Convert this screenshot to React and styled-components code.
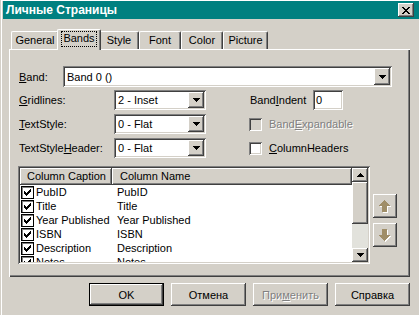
import React from "react";
import styled, { createGlobalStyle, css } from "styled-components";

const face = "#d4d0c8";

const GlobalStyle = createGlobalStyle`
  html, body { margin: 0; padding: 0; background: ${face}; }
  body {
    font-family: "Liberation Sans", Arial, sans-serif;
    font-size: 11px;
    color: #000;
  }
  * { box-sizing: border-box; }
`;

const raised = css`
  box-shadow: inset -1px -1px #404040, inset 1px 1px #fff,
    inset -2px -2px #808080, inset 2px 2px ${face};
`;
const sunken = css`
  box-shadow: inset 1px 1px #808080, inset -1px -1px #fff,
    inset 2px 2px #404040, inset -2px -2px ${face};
`;

const Window = styled.div`
  width: 419px;
  height: 315px;
  overflow: hidden;
  background: ${face};
  border-left: 1px solid ${face};
`;

const Frame = styled.div`
  height: 100%;
  border-left: 1px solid #fff;
  border-top: 1px solid #fff;
  padding-left: 1px;
`;

const TitleBar = styled.div`
  height: 18px;
  background: #008080;
  display: flex;
  align-items: center;
  justify-content: space-between;
  padding: 0 5px 0 3px;
  color: #fff;
  font-family: "Liberation Sans", Arial, sans-serif;
  font-weight: bold;
  font-size: 12px;
`;

const CloseBtn = styled.div`
  width: 16px;
  height: 14px;
  background: ${face};
  ${raised};
  display: flex;
  align-items: center;
  justify-content: center;
  svg { display: block; }
`;

const Body = styled.div`
  padding: 10px 9px 0 6px;
`;

const TabStrip = styled.div`
  display: flex;
  align-items: flex-end;
  height: 20px;
  padding-left: 2px;
  position: relative;
  z-index: 1;
`;

const Tab = styled.div`
  width: ${(p) => p.$w}px;
  height: ${(p) => (p.$active ? 21 : 18)}px;
  margin: ${(p) => (p.$active ? "0 -2px -1px" : "0")};
  background: ${face};
  border-top: 1px solid #fff;
  border-left: 1px solid #fff;
  border-right: 1px solid #404040;
  border-radius: 2px 2px 0 0;
  box-shadow: inset -1px 0 #808080;
  display: flex;
  justify-content: center;
  padding-top: 2px;
  position: relative;
  z-index: ${(p) => (p.$active ? 2 : 0)};
  span {
    line-height: 13px;
    height: 14px;
    padding: 0 1px;
    outline: ${(p) => (p.$active ? "1px dotted #000" : "none")};
  }
`;

const Panel = styled.div`
  height: 228px;
  background: ${face};
  box-shadow: inset 1px 1px #fff, inset -1px -1px #404040,
    inset -2px -2px #808080;
  padding: 17px 0 0 9px;
  display: flex;
  flex-direction: column;
`;

const BandRow = styled.div`
  display: flex;
  align-items: center;
  height: 21px;
`;

const Label = styled.div`
  width: ${(p) => p.$w || 0}px;
  padding-left: 1px;
  white-space: nowrap;
  color: ${(p) => (p.$disabled ? "#808080" : "#000")};
  text-shadow: ${(p) => (p.$disabled ? "1px 1px #fff" : "none")};
  u { text-decoration: underline; text-underline-offset: 1px; }
`;

const Combo = styled.div`
  width: ${(p) => p.$w}px;
  height: ${(p) => p.$h || 20}px;
  background: #fff;
  ${sunken};
  padding: 2px;
  display: flex;
  align-items: stretch;
`;

const ComboText = styled.div`
  flex: 1;
  padding-left: 2px;
  display: flex;
  align-items: center;
`;

const DropBtn = styled.div`
  width: 16px;
  background: ${face};
  ${raised};
  display: flex;
  align-items: center;
  justify-content: center;
`;

const Grid = styled.div`
  display: grid;
  grid-template-columns: 96px 92px 43px 64px 30px;
  grid-auto-rows: 20px;
  row-gap: 4px;
  margin-top: 3px;
  align-items: center;
`;

const Field = styled.div`
  width: 30px;
  height: 20px;
  background: #fff;
  ${sunken};
  padding: 0 3px;
  display: flex;
  align-items: center;
`;

const CheckRow = styled.label`
  grid-column: 4 / span 2;
  display: flex;
  align-items: center;
  gap: 6px;
`;

const Box = styled.div`
  width: 13px;
  height: 13px;
  flex: none;
  background: ${(p) => (p.$disabled ? face : "#fff")};
  ${sunken};
  display: flex;
  align-items: center;
  justify-content: center;
  svg { display: block; }
`;

const ListArea = styled.div`
  display: flex;
  margin-top: 8px;
`;

const List = styled.div`
  width: 352px;
  height: 98px;
  ${sunken};
  background: #fff;
  padding: 2px;
  display: flex;
  overflow: hidden;
`;

const ListMain = styled.div`
  flex: 1;
  display: flex;
  flex-direction: column;
  overflow: hidden;
`;

const HeaderRow = styled.div`
  display: flex;
  height: 17px;
  flex: none;
`;

const HeaderCell = styled.div`
  width: ${(p) => p.$w}px;
  flex: ${(p) => (p.$grow ? 1 : "none")};
  background: ${face};
  ${raised};
  padding: 2px 0 0 ${(p) => p.$pad}px;
`;

const Row = styled.div`
  display: flex;
  align-items: center;
  height: 14px;
  flex: none;
`;

const CaptionCell = styled.div`
  width: 94px;
  display: flex;
  align-items: center;
  gap: 2px;
  white-space: nowrap;
`;

const ListBox = styled.div`
  width: 13px;
  height: 13px;
  flex: none;
  margin-left: 1px;
  background: #fff;
  border: 1px solid #000;
  box-shadow: inset 1px 1px #808080;
  display: flex;
  align-items: center;
  justify-content: center;
  svg { display: block; }
`;

const NameCell = styled.div`
  padding-left: 3px;
  white-space: nowrap;
`;

const ScrollBar = styled.div`
  width: 16px;
  display: flex;
  flex-direction: column;
  flex: none;
`;

const ScrollBtn = styled.div`
  height: ${(p) => p.$h}px;
  flex: none;
  background: ${face};
  ${raised};
  display: flex;
  align-items: center;
  justify-content: center;
`;

const Track = styled.div`
  flex: 1;
  background: #e2e2dc;
`;

const MoveCol = styled.div`
  display: flex;
  flex-direction: column;
  gap: 5px;
  padding: 28px 0 0 3px;
`;

const MoveBtn = styled.div`
  width: 24px;
  height: 24px;
  background: ${face};
  ${raised};
  display: flex;
  align-items: center;
  justify-content: center;
  svg { display: block; }
`;

const ButtonRow = styled.div`
  display: flex;
  justify-content: flex-end;
  gap: 7px;
  margin-top: 6px;
`;

const Button = styled.div`
  width: 75px;
  height: 23px;
  background: ${face};
  display: flex;
  align-items: center;
  justify-content: center;
  color: ${(p) => (p.$disabled ? "#808080" : "#000")};
  text-shadow: ${(p) => (p.$disabled ? "1px 1px #fff" : "none")};
  ${(p) =>
    p.$default
      ? css`
          box-shadow: inset 1px 1px #000, inset -1px -1px #000,
            inset -2px -2px #404040, inset 2px 2px #fff,
            inset -3px -3px #808080;
        `
      : raised};
  u { text-decoration: underline; }
`;

const Check = () => (
  <svg width="7" height="7" viewBox="0 0 7 7" shapeRendering="crispEdges">
    <path d="M0 2h1v3H0zM1 3h1v3H1zM2 4h1v3H2zM3 3h1v3H3zM4 2h1v3H4zM5 1h1v3H5zM6 0h1v3H6z" fill="#000" />
  </svg>
);

const Down = () => (
  <svg width="7" height="4" viewBox="0 0 7 4" shapeRendering="crispEdges">
    <path d="M0 0h7v1H0zM1 1h5v1H1zM2 2h3v1H2zM3 3h1v1H3z" fill="#000" />
  </svg>
);

const Up = () => (
  <svg width="7" height="4" viewBox="0 0 7 4" shapeRendering="crispEdges">
    <path d="M3 0h1v1H3zM2 1h3v1H2zM1 2h5v1H1zM0 3h7v1H0z" fill="#000" />
  </svg>
);

const CloseX = () => (
  <svg width="8" height="7" viewBox="0 0 8 7" shapeRendering="crispEdges">
    <path d="M0 0h2v1H0zM6 0h2v1H6zM1 1h2v1H1zM5 1h2v1H5zM2 2h4v1H2zM3 3h2v1H3zM2 4h4v1H2zM1 5h2v1H1zM5 5h2v1H5zM0 6h2v1H0zM6 6h2v1H6z" fill="#000" />
  </svg>
);

const upShape = "M5 0h1v1h1v1h1v1h1v1h1v1h1v1H8v6H3V6H0V5h1V4h1V3h1V2h1V1h1z";
const downShape = "M3 0h5v6h3v1h-1v1H9v1H8v1H7v1H6v1H5v-1H4v-1H3V9H2V8H1V7H0V6h3z";

const BigArrow = ({ down }) => (
  <svg width="13" height="13" viewBox="0 0 13 13" shapeRendering="crispEdges">
    <path d={down ? downShape : upShape} fill="#fff" transform="translate(1 1)" />
    <path d={down ? downShape : upShape} fill="#a08e68" />
  </svg>
);

const tabs = [
  ["General", 48],
  ["Bands", 44],
  ["Style", 40],
  ["Font", 42],
  ["Color", 42],
  ["Picture", 45],
];

const rows = ["PubID", "Title", "Year Published", "ISBN", "Description", "Notes"];

export default function App() {
  return (
    <Window>
      <GlobalStyle />
      <Frame>
        <TitleBar>
          <span>Личные Страницы</span>
          <CloseBtn><CloseX /></CloseBtn>
        </TitleBar>
        <Body>
          <TabStrip>
            {tabs.map(([t, w]) => (
              <Tab key={t} $w={w} $active={t === "Bands"}>
                <span>{t}</span>
              </Tab>
            ))}
          </TabStrip>
          <Panel>
            <BandRow>
              <Label $w={45}><u>B</u>and:</Label>
              <Combo $w={329} $h={21}>
                <ComboText>Band 0 ()</ComboText>
                <DropBtn><Down /></DropBtn>
              </Combo>
            </BandRow>
            <Grid>
              <Label><u>G</u>ridlines:</Label>
              <Combo $w={92}>
                <ComboText>2 - Inset</ComboText>
                <DropBtn><Down /></DropBtn>
              </Combo>
              <span />
              <Label>Band<u>I</u>ndent</Label>
              <Field>0</Field>

              <Label><u>T</u>extStyle:</Label>
              <Combo $w={92}>
                <ComboText>0 - Flat</ComboText>
                <DropBtn><Down /></DropBtn>
              </Combo>
              <span />
              <CheckRow>
                <Box $disabled />
                <Label $disabled>Band<u>E</u>xpandable</Label>
              </CheckRow>

              <Label>TextStyle<u>H</u>eader:</Label>
              <Combo $w={92}>
                <ComboText>0 - Flat</ComboText>
                <DropBtn><Down /></DropBtn>
              </Combo>
              <span />
              <CheckRow>
                <Box />
                <Label><u>C</u>olumnHeaders</Label>
              </CheckRow>
            </Grid>
            <ListArea>
              <List>
                <ListMain>
                  <HeaderRow>
                    <HeaderCell $w={92} $pad={7}>Column Caption</HeaderCell>
                    <HeaderCell $grow $pad={8}>Column Name</HeaderCell>
                  </HeaderRow>
                  {rows.map((r) => (
                    <Row key={r}>
                      <CaptionCell>
                        <ListBox><Check /></ListBox>
                        {r}
                      </CaptionCell>
                      <NameCell>{r}</NameCell>
                    </Row>
                  ))}
                </ListMain>
                <ScrollBar>
                  <ScrollBtn $h={14}><Up /></ScrollBtn>
                  <ScrollBtn $h={42} />
                  <Track />
                  <ScrollBtn $h={14}><Down /></ScrollBtn>
                </ScrollBar>
              </List>
              <MoveCol>
                <MoveBtn><BigArrow /></MoveBtn>
                <MoveBtn><BigArrow down /></MoveBtn>
              </MoveCol>
            </ListArea>
          </Panel>
          <ButtonRow>
            <Button $default>OK</Button>
            <Button>Отмена</Button>
            <Button $disabled>При<u>м</u>енить</Button>
            <Button>Справка</Button>
          </ButtonRow>
        </Body>
      </Frame>
    </Window>
  );
}
